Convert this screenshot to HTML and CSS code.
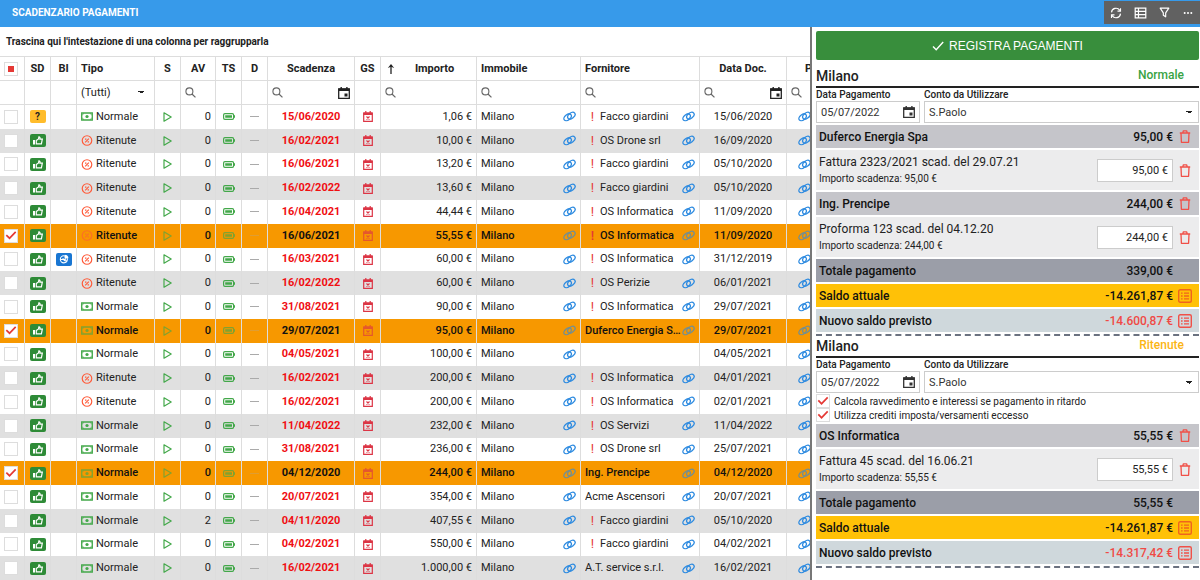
FILE: index.html
```html
<!DOCTYPE html>
<html lang="it">
<head>
<meta charset="utf-8">
<title>Scadenzario pagamenti</title>
<meta name="viewport" content="width=device-width, initial-scale=1">
<link rel="stylesheet" href="styles.css">
</head>
<body>
<svg class="sprite" aria-hidden="true">
  <symbol id="i-refresh" viewBox="0 0 16 16"><path d="M2 7.2A6 6 0 0 1 13 4.4M14 1.5v4h-4M14 8.8A6 6 0 0 1 3 11.6M2 14.5v-4h4" fill="none" stroke="currentColor" stroke-width="1.5"/></symbol>
  <symbol id="i-table" viewBox="0 0 16 14"><path d="M1.5 1h13v12h-13zM1.500 4.900h13M1.500 9h13M5.500 1v12" fill="none" stroke="currentColor" stroke-width="1.500"/></symbol>
  <symbol id="i-filter" viewBox="0 0 14 14"><path d="M1.500 1.500h11L8.500 7.500v5L5.500 10.500v-3z" fill="none" stroke="currentColor" stroke-width="1.500" stroke-linejoin="round"/></symbol>
  <symbol id="i-more" viewBox="0 0 12 12"><g fill="currentColor"><circle cx="2" cy="6" r="1.200"/><circle cx="6" cy="6" r="1.200"/><circle cx="10" cy="6" r="1.200"/></g></symbol>
  <symbol id="i-check" viewBox="0 0 12 12"><path d="M1 6.500l3.200 3.200L11.200 2" fill="none" stroke="currentColor" stroke-width="1.400"/></symbol>
  <symbol id="i-search" viewBox="0 0 12 12"><circle cx="4.800" cy="4.800" r="3.800" fill="none" stroke="currentColor" stroke-width="1.200"/><path d="M7.600 7.600l3.800 3.800" stroke="currentColor" stroke-width="1.300"/></symbol>
  <symbol id="i-calendar" viewBox="0 0 12 12"><path d="M.7 1.800h10.600v9.500H.7z" fill="none" stroke="currentColor" stroke-width="1.300"/><path d="M.5 1.500h11v2.500H.5zM2.500 0h1.400v2H2.500zM8.200 0h1.400v2H8.200zM6.500 6.500h3v3h-3z" fill="currentColor"/></symbol>
  <symbol id="i-up" viewBox="0 0 8 12"><path d="M4 11V2" fill="none" stroke="currentColor" stroke-width="1.300"/><path d="M.8 5L4 1l3.200 4L4 3.800z" fill="currentColor"/></symbol>
  <symbol id="i-cash" viewBox="0 0 12 9"><path d="M.7 1h10.600v7H.7z" fill="none" stroke="currentColor" stroke-width="1.300"/><circle cx="6" cy="4.500" r="1.600" fill="currentColor"/><path d="M1 3q1.400 0 1.600-1.800M11 3q-1.400 0-1.600-1.800M1 6q1.400 0 1.600 1.800M11 6q-1.400 0-1.600 1.800" fill="none" stroke="currentColor" stroke-width=".6"/></symbol>
  <symbol id="i-tax" viewBox="0 0 12 12"><circle cx="6" cy="6" r="5.200" fill="none" stroke="currentColor" stroke-width="1.300"/><path d="M4 8l4-4M3.800 4.600h1.600M6.600 7.400h1.600" stroke="currentColor" stroke-width="1.300"/></symbol>
  <symbol id="i-play" viewBox="0 0 9 10"><path d="M1 .8v8.400L8.200 5z" fill="none" stroke="currentColor" stroke-width="1.200" stroke-linejoin="round"/></symbol>
  <symbol id="i-battery" viewBox="0 0 12 7"><rect x=".6" y=".6" width="10" height="5.800" rx="1.300" fill="none" stroke="currentColor" stroke-width="1.200"/><path d="M2.200 2.200h6.800v2.600H2.200zM11 2.200h1v2.600h-1z" fill="currentColor"/></symbol>
  <symbol id="i-late" viewBox="0 0 10 11"><path d="M.7 2h8.600v8.300H.7z" fill="none" stroke="currentColor" stroke-width="1.200"/><path d="M.5 1.500h9V4h-9zM2.200 0h1.200v2H2.200zM6.600 0h1.200v2H6.600z" fill="currentColor"/><path d="M3.500 5.500l3 3M6.500 5.500l-3 3" stroke="currentColor" stroke-width="1.100"/></symbol>
  <symbol id="i-link" viewBox="0 0 13 11"><g fill="none" stroke="currentColor" stroke-width="1.300"><ellipse cx="4.600" cy="6.300" rx="4.200" ry="2.700" transform="rotate(-38 4.600 6.300)"/><ellipse cx="8.400" cy="4.700" rx="4.200" ry="2.700" transform="rotate(-38 8.400 4.700)"/></g></symbol>
  <symbol id="i-thumb" viewBox="0 0 10 9"><path d="M0 4h2v4.500H0z" fill="currentColor"/><path d="M3.300 4.400L5.500 3 5.900.9q1.500 0 1 2.300h2.400l-.9 4.600H3.300z" fill="none" stroke="currentColor" stroke-width="1.200"/></symbol>
  <symbol id="i-globe" viewBox="0 0 12 12"><circle cx="5.800" cy="6.400" r="4.200" fill="none" stroke="currentColor" stroke-width="1.300"/><path d="M2 6.500h5.500v-4M4.500 5q1.500 4 5 3" fill="none" stroke="currentColor" stroke-width="1.300"/><path d="M7 .8a4.500 4.500 0 0 1 4.300 4.300H7z" fill="currentColor"/></symbol>
  <symbol id="i-trash" viewBox="0 0 12 13"><path d="M.8 3h10.400M3.800 3l.5-2.200h3.400L8.200 3M2 3l.4 9.300h7.200L10 3" fill="none" stroke="currentColor" stroke-width="1.300" stroke-linejoin="round"/></symbol>
  <symbol id="i-list" viewBox="0 0 14 14"><rect x=".7" y=".7" width="12.600" height="12.600" rx="1.500" fill="none" stroke="currentColor" stroke-width="1.400"/><path d="M3 4.200h1.600M3 7h1.600M3 9.800h1.600M6 4.200h5M6 7h5M6 9.800h5" stroke="currentColor" stroke-width="1.300"/></symbol>
</svg>

<header class="topbar">
  <h1 class="topbar-title">SCADENZARIO PAGAMENTI</h1>
  <div class="toolbar">
    <button class="icon-button" aria-label="Aggiorna"><svg width="12" height="12"><use href="#i-refresh"/></svg></button>
    <button class="icon-button" aria-label="Colonne"><svg width="13" height="12"><use href="#i-table"/></svg></button>
    <button class="icon-button" aria-label="Filtro"><svg width="11" height="11"><use href="#i-filter"/></svg></button>
    <button class="icon-button" aria-label="Altro"><svg width="10" height="10"><use href="#i-more"/></svg></button>
  </div>
</header>

<main class="layout">
  <section class="grid-panel">
    <div class="group-hint">Trascina qui l'intestazione di una colonna per raggrupparla</div>
    <div class="grid-body">
    <table class="grid">
      <colgroup>
        <col class="w-check"><col class="w-icon"><col class="w-icon"><col class="w-tipo"><col class="w-icon"><col class="w-av"><col class="w-icon"><col class="w-icon"><col class="w-date"><col class="w-icon"><col class="w-amount"><col class="w-building"><col class="w-supplier"><col class="w-date"><col>
      </colgroup>
      <thead>
        <tr class="titles">
          <th><input type="checkbox" class="box partial" aria-label="Seleziona tutto"></th>
          <th>SD</th><th>BI</th><th class="left">Tipo</th><th>S</th><th>AV</th><th>TS</th><th>D</th><th>Scadenza</th><th>GS</th>
          <th><span class="sorted"><svg width="8" height="12"><use href="#i-up"/></svg><span class="sorted-name">Importo</span></span></th>
          <th class="left">Immobile</th><th class="left">Fornitore</th><th>Data Doc.</th><th class="cut">P</th>
        </tr>
        <tr class="filters">
          <td></td><td></td><td></td>
          <td><select class="type-filter" aria-label="Tipo"><option>(Tutti)</option><option>Normale</option><option>Ritenute</option></select></td>
          <td></td>
          <td><label class="search"><svg width="11" height="11"><use href="#i-search"/></svg><input type="text" aria-label="Filtra AV"></label></td>
          <td></td><td></td>
          <td><label class="search"><svg width="11" height="11"><use href="#i-search"/></svg><input type="text" aria-label="Filtra scadenza"><svg class="dark" width="12" height="12"><use href="#i-calendar"/></svg></label></td>
          <td></td>
          <td><label class="search"><svg width="11" height="11"><use href="#i-search"/></svg><input type="text" aria-label="Filtra importo"></label></td>
          <td><label class="search"><svg width="11" height="11"><use href="#i-search"/></svg><input type="text" aria-label="Filtra immobile"></label></td>
          <td><label class="search"><svg width="11" height="11"><use href="#i-search"/></svg><input type="text" aria-label="Filtra fornitore"></label></td>
          <td><label class="search"><svg width="11" height="11"><use href="#i-search"/></svg><input type="text" aria-label="Filtra data documento"><svg class="dark" width="12" height="12"><use href="#i-calendar"/></svg></label></td>
          <td><label class="search"><svg width="11" height="11"><use href="#i-search"/></svg><input type="text" aria-label="Filtra P"></label></td>
        </tr>
      </thead>
      <tbody id="rows"></tbody>
    </table>
    </div>
  </section>

  <aside class="side">
    <button class="register"><svg width="12" height="12"><use href="#i-check"/></svg>REGISTRA PAGAMENTI</button>

    <section class="payment">
      <div class="payment-head"><h2>Milano</h2><span class="kind normal">Normale</span></div>
      <div class="fields">
        <div class="field"><label for="d1">Data Pagamento</label><div class="control"><input id="d1" type="text" value="05/07/2022"><svg width="12" height="12"><use href="#i-calendar"/></svg></div></div>
        <div class="field"><label for="c1">Conto da Utilizzare</label><select id="c1" class="control"><option>S.Paolo</option></select></div>
      </div>
      <div class="lines">
        <div class="line supplier"><span>Duferco Energia Spa</span><b>95,00 €</b><button class="act" aria-label="Elimina"><svg width="12" height="13"><use href="#i-trash"/></svg></button></div>
        <div class="item"><div class="desc"><label for="a1">Fattura 2323/2021 scad. del 29.07.21</label><small>Importo scadenza: 95,00 €</small></div><input id="a1" class="amount" type="text" value="95,00 €"><button class="act" aria-label="Elimina"><svg width="12" height="13"><use href="#i-trash"/></svg></button></div>
        <div class="line supplier"><span>Ing. Prencipe</span><b>244,00 €</b><button class="act" aria-label="Elimina"><svg width="12" height="13"><use href="#i-trash"/></svg></button></div>
        <div class="item"><div class="desc"><label for="a2">Proforma 123 scad. del 04.12.20</label><small>Importo scadenza: 244,00 €</small></div><input id="a2" class="amount" type="text" value="244,00 €"><button class="act" aria-label="Elimina"><svg width="12" height="13"><use href="#i-trash"/></svg></button></div>
        <div class="line total"><span>Totale pagamento</span><b>339,00 €</b><i class="act"></i></div>
        <div class="line current"><span>Saldo attuale</span><b>-14.261,87 €</b><button class="act" aria-label="Dettaglio"><svg width="14" height="14"><use href="#i-list"/></svg></button></div>
        <div class="line next"><span>Nuovo saldo previsto</span><b>-14.600,87 €</b><button class="act" aria-label="Dettaglio"><svg width="14" height="14"><use href="#i-list"/></svg></button></div>
      </div>
    </section>

    <section class="payment">
      <div class="payment-head"><h2>Milano</h2><span class="kind withheld">Ritenute</span></div>
      <div class="fields">
        <div class="field"><label for="d2">Data Pagamento</label><div class="control"><input id="d2" type="text" value="05/07/2022"><svg width="12" height="12"><use href="#i-calendar"/></svg></div></div>
        <div class="field"><label for="c2">Conto da Utilizzare</label><select id="c2" class="control"><option>S.Paolo</option></select></div>
      </div>
      <div class="options">
        <label><input type="checkbox" class="box" checked>Calcola ravvedimento e interessi se pagamento in ritardo</label>
        <label><input type="checkbox" class="box" checked>Utilizza crediti imposta/versamenti eccesso</label>
      </div>
      <div class="lines">
        <div class="line supplier"><span>OS Informatica</span><b>55,55 €</b><button class="act" aria-label="Elimina"><svg width="12" height="13"><use href="#i-trash"/></svg></button></div>
        <div class="item"><div class="desc"><label for="a3">Fattura 45 scad. del 16.06.21</label><small>Importo scadenza: 55,55 €</small></div><input id="a3" class="amount" type="text" value="55,55 €"><button class="act" aria-label="Elimina"><svg width="12" height="13"><use href="#i-trash"/></svg></button></div>
        <div class="line total"><span>Totale pagamento</span><b>55,55 €</b><i class="act"></i></div>
        <div class="line current"><span>Saldo attuale</span><b>-14.261,87 €</b><button class="act" aria-label="Dettaglio"><svg width="14" height="14"><use href="#i-list"/></svg></button></div>
        <div class="line next"><span>Nuovo saldo previsto</span><b>-14.317,42 €</b><button class="act" aria-label="Dettaglio"><svg width="14" height="14"><use href="#i-list"/></svg></button></div>
      </div>
    </section>
  </aside>
</main>
<script src="app.js"></script>
</body>
</html>
```

FILE: styles.css
```css
* { box-sizing: border-box; }
body {
  margin: 0;
  height: 100vh;
  display: flex;
  flex-direction: column;
  overflow: hidden;
  background: #fff;
  color: #222;
  font-family: Roboto, "Liberation Sans", sans-serif;
  font-size: 11px;
}
svg { display: block; flex: none; }
button, input, select { font: inherit; color: inherit; margin: 0; }
button { border: 0; background: none; padding: 0; display: flex; align-items: center; justify-content: center; }
.sprite { position: absolute; width: 0; height: 0; }

.topbar {
  flex: none;
  display: flex;
  justify-content: space-between;
  height: 27px;
  padding: 1px 0 0 12px;
  background: #379aea;
  color: #fff;
}
.topbar-title { margin: 0; font-size: 10px; line-height: 24px; font-weight: 700; }
.toolbar { display: flex; height: 23px; width: 96px; background: #616161; }
.icon-button { flex: 1; }

.layout { flex: 1; min-height: 0; display: flex; }
.grid-panel { flex: 1; min-width: 0; display: flex; flex-direction: column; overflow: hidden; border-right: 1px solid #777; }
.group-hint { flex: none; padding: 0 6px; line-height: 29px; font-weight: 700; font-size: 10px; }
.grid-body { flex: 1; min-height: 0; }
.grid { width: 100%; height: 100%; table-layout: fixed; border-collapse: separate; border-spacing: 0; border-top: 1px solid #ddd; }
.w-check { width: 25px; }
.w-icon { width: 26px; }
.w-tipo { width: 78px; }
.w-av { width: 35px; }
.w-date { width: 87px; }
.w-amount { width: 96px; }
.w-building { width: 104px; }
.w-supplier { width: 119px; }

.grid th, .grid td { padding: 0 4px; border-right: 1px solid #ddd; overflow: hidden; white-space: nowrap; text-align: center; vertical-align: middle; line-height: 16px; }
.grid th:last-child, .grid td:last-child { border-right: 0; }
.titles, .filters { height: 24px; }
.titles th, .filters td { border-bottom: 1px solid #ddd; font-weight: 700; }
.filters td { font-weight: 400; }
.grid .left { text-align: left; }
.grid .right { text-align: right; }
.grid .cut { text-align: left; padding: 0 0 0 18px; }
.sorted { display: flex; align-items: center; padding-left: 2px; }
.sorted-name { flex: 1; padding-left: 2px; }
.search { display: flex; align-items: center; color: #666; }
.search input { flex: 1; min-width: 0; width: 0; height: 16px; border: 0; padding: 0; background: none; }
.search .dark { color: #222; }
.type-filter, select.control {
  appearance: none;
  background: linear-gradient(to bottom left, #222 50%, transparent 50%) right 9px center / 3px 3px no-repeat, linear-gradient(to bottom right, #222 50%, transparent 50%) right 6px center / 3px 3px no-repeat;
}
.type-filter { width: 100%; height: 18px; border: 0; padding: 0; }

.grid tbody tr:nth-child(even) { background: #e0e0e0; }
.grid tbody tr.selected { background: #f79800; color: #111; font-weight: 500; }
.cell { display: flex; align-items: center; justify-content: center; }
.cell.start { justify-content: flex-start; }
.cell .text { flex: 1; min-width: 0; overflow: hidden; text-overflow: ellipsis; text-align: left; }
.kind-icon { margin-right: 3px; }
.alert { width: 15px; text-align: center; color: #e53935; font-size: 13px; }
.green { color: #43a84a; }
.tax { color: #ff5b3a; }
.red { color: #dc3545; }
.blue { color: #2c8ae0; }
.dash { width: 9px; height: 1px; background: #aaa; }
.selected .green, .selected .tax, .selected .red, .selected .blue { opacity: 0.65; }
.selected .dash { opacity: 0.3; }
.badge { width: 16px; height: 13px; border-radius: 2px; display: flex; align-items: center; justify-content: center; background: #2e8b37; color: #fff; }
.badge.ask { background: #ffbc2b; color: #222; font-weight: 700; font-size: 10px; line-height: 13px; }
.badge.web { background: #1976d2; }
.due { color: #f00e12; font-weight: 700; }
.selected .due { color: #111; }
.last-link { padding-left: 7px; }

.box { appearance: none; flex: none; display: block; width: 14px; height: 14px; border: 1px solid #ddd; background: #fff; padding: 0; }
.box::before { content: ""; display: block; width: 12px; height: 12px; }
.box:checked::before { background: #e53935; clip-path: polygon(6% 50%, 16% 40%, 38% 62%, 84% 14%, 94% 24%, 38% 83%); }
.box.partial::before { width: 6px; height: 6px; margin: 3px; background: #e53935; }

.side { flex: none; width: 389px; padding: 4px 1px 0 4px; border-left: 1px solid #777; }
.register { width: 100%; height: 29px; gap: 5px; border-radius: 2px; background: #388e3c; color: #fff; font-family: "Liberation Sans", Arial, sans-serif; font-size: 12px; }
.payment { border-bottom: 2px dashed #6b7280; padding-bottom: 2px; }
.register + .payment { padding-top: 6px; }
.payment-head { display: flex; justify-content: space-between; padding-right: 15px; border-bottom: 2px solid #222; line-height: 20px; }
.payment-head h2 { margin: 0; font-size: 14px; font-weight: 500; }
.kind { font-size: 12px; line-height: 18px; font-weight: 500; }
.normal { color: #38a344; }
.withheld { color: #fbb514; }
.fields { display: grid; grid-template-columns: 104px 1fr; gap: 4px; }
.field label { display: block; line-height: 13px; font-size: 10px; font-weight: 500; }
.control { display: flex; align-items: center; width: 100%; height: 22px; border: 1px solid #ccc; border-radius: 0; padding: 0 4px; background-color: #fff; color: #333; }
.control input { flex: 1; min-width: 0; border: 0; padding: 0; }
.options label { display: flex; align-items: center; gap: 4px; height: 14px; font-size: 10px; }
.options { padding-top: 1px; }
.lines { display: flex; flex-direction: column; gap: 2px; padding-top: 2px; }
.line, .item { display: flex; align-items: center; padding: 0 6px 0 3px; }
.line { height: 23px; font-size: 12px; font-weight: 500; color: #111; }
.line span { flex: 1; }
.line b { font-weight: 500; }
.act { width: 16px; margin-left: 4px; color: #f05048; }
.supplier { background: #c5c5ca; }
.item { height: 40px; background: #ececed; }
.desc { flex: 1; display: flex; flex-direction: column; gap: 1px; font-size: 12px; line-height: 16px; }
.desc small { font-size: 10px; }
.amount { width: 76px; height: 23px; border: 1px solid #ccc; padding: 0 4px; background: #fff; text-align: right; }
.total { background: #9b9ea8; }
.current { background: #ffc107; }
.current .act { color: #f0641e; }
.next { background: #cfd8dc; }
.next b { color: #f04a45; }
```

FILE: app.js
```js
// sd, bi, tipo, av, scadenza, importo, fornitore, alert, data documento, selected
const data = [
  ["ask", 0, "N", 0, "15/06/2020", "1,06", "Facco giardini", 1, "15/06/2020", 0],
  ["ok", 0, "R", 0, "16/02/2021", "10,00", "OS Drone srl", 1, "16/09/2020", 0],
  ["ok", 0, "R", 0, "16/06/2021", "13,20", "Facco giardini", 1, "05/10/2020", 0],
  ["ok", 0, "R", 0, "16/02/2022", "13,60", "Facco giardini", 1, "05/10/2020", 0],
  ["ok", 0, "R", 0, "16/04/2021", "44,44", "OS Informatica", 1, "11/09/2020", 0],
  ["ok", 0, "R", 0, "16/06/2021", "55,55", "OS Informatica", 1, "11/09/2020", 1],
  ["ok", 1, "R", 0, "16/03/2021", "60,00", "OS Informatica", 1, "31/12/2019", 0],
  ["ok", 0, "R", 0, "16/02/2022", "60,00", "OS Perizie", 1, "06/01/2021", 0],
  ["ok", 0, "N", 0, "31/08/2021", "90,00", "OS Informatica", 1, "29/07/2021", 0],
  ["ok", 0, "N", 0, "29/07/2021", "95,00", "Duferco Energia Spa", 0, "29/07/2021", 1],
  ["ok", 0, "N", 0, "04/05/2021", "100,00", "", 0, "04/05/2021", 0],
  ["ok", 0, "R", 0, "16/02/2021", "200,00", "OS Informatica", 1, "04/01/2021", 0],
  ["ok", 0, "R", 0, "16/02/2021", "200,00", "OS Informatica", 1, "02/01/2021", 0],
  ["ok", 0, "N", 0, "11/04/2022", "232,00", "OS Servizi", 1, "11/04/2022", 0],
  ["ok", 0, "N", 0, "31/08/2021", "236,00", "OS Drone srl", 1, "25/07/2021", 0],
  ["ok", 0, "N", 0, "04/12/2020", "244,00", "Ing. Prencipe", 0, "04/12/2020", 1],
  ["ok", 0, "N", 0, "20/07/2021", "354,00", "Acme Ascensori", 0, "20/07/2021", 0],
  ["ok", 0, "N", 2, "04/11/2020", "407,55", "Facco giardini", 1, "05/10/2020", 0],
  ["ok", 0, "N", 0, "04/02/2021", "550,00", "Facco giardini", 1, "04/02/2021", 0],
  ["ok", 0, "N", 0, "16/02/2021", "1.000,00", "A.T. service s.r.l.", 0, "16/02/2021", 0]
];

const icon = (id, w, h, cls = "") => `<svg class="${cls}" width="${w}" height="${h}"><use href="#i-${id}"/></svg>`;
const cell = (html, cls = "") => `<div class="cell ${cls}">${html}</div>`;
const link = icon("link", 13, 11, "blue");

document.getElementById("rows").innerHTML = data.map(([sd, bi, tipo, av, due, sum, name, alert, doc, on], i) => `
<tr${on ? ' class="selected"' : ""}>
<td><input type="checkbox" class="box" aria-label="Seleziona riga ${i + 1}"${on ? " checked" : ""}></td>
<td>${cell(sd === "ask" ? '<span class="badge ask">?</span>' : `<span class="badge">${icon("thumb", 10, 9)}</span>`)}</td>
<td>${bi ? cell(`<span class="badge web">${icon("globe", 10, 10)}</span>`) : ""}</td>
<td>${cell((tipo === "N" ? icon("cash", 12, 9, "kind-icon green") : icon("tax", 12, 11, "kind-icon tax")) + `<span class="text">${tipo === "N" ? "Normale" : "Ritenute"}</span>`, "start")}</td>
<td>${cell(icon("play", 9, 10, "green"))}</td>
<td class="right">${av}</td>
<td>${cell(icon("battery", 12, 7, "green"))}</td>
<td>${cell('<span class="dash"></span>')}</td>
<td><span class="due">${due}</span></td>
<td>${cell(icon("late", 10, 11, "red"))}</td>
<td class="right">${sum} €</td>
<td>${cell(`<span class="text">Milano</span>${link}`, "start")}</td>
<td>${cell((alert ? '<span class="alert">!</span>' : "") + `<span class="text">${name}</span>` + (name || !on ? link : ""), "start").replace(name ? "" : link, "")}</td>
<td>${doc}</td>
<td>${cell(`<span class="last-link">${link}</span>`, "start")}</td>
</tr>`).join("");
```
